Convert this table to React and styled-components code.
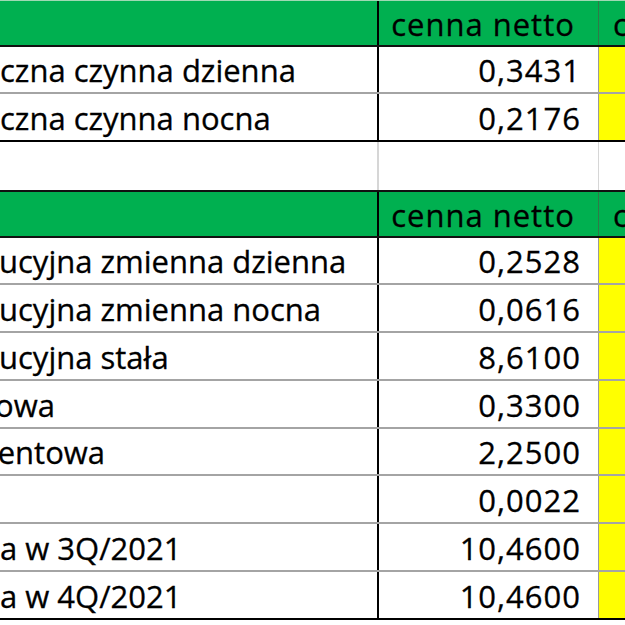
import React from 'react'
import styled, { createGlobalStyle, css } from 'styled-components'

const GlobalStyle = createGlobalStyle`
  html, body {
    margin: 0;
    padding: 0;
    background: #fff;
    overflow: hidden;
  }
`

const Sheet = styled.div`
  width: 625px;
  height: 625px;
  overflow: hidden;
  background: #fff;
  font-family: 'Open Sans', 'Noto Sans', sans-serif;
  font-size: 31px;
  color: #000;
  -webkit-text-stroke: 0.3px #000;
`

const Row = styled.div`
  display: grid;
  grid-template-columns: 379px 220px 1fr;
  height: ${p => p.$height || 47.75}px;
  box-sizing: border-box;
  border-bottom: ${p => p.$last ? '2px solid #000' : '2px solid #a4a4a4'};

  ${p => p.$kind === 'header' && css`
    background: #00b050;
    border-bottom: 2px solid #111;
  `}

  ${p => p.$kind === 'spacer' && css`
    border-bottom: 0;
  `}

  ${p => p.$top && css`
    border-top: ${p.$top};
  `}
`

const LabelCell = styled.div`
  box-sizing: border-box;
  border-right: 2px solid ${p => p.$kind === 'spacer' ? '#d6d6d6' : '#000'};
  overflow: hidden;
  white-space: nowrap;
  display: flex;
  align-items: center;
  padding-top: 2px;

  span {
    margin-left: ${p => p.$shift || 0}px;
  }
`

const ValueCell = styled.div`
  box-sizing: border-box;
  border-right: 1px solid ${p =>
    p.$kind === 'header' ? '#2f7a48' : p.$kind === 'spacer' ? '#d6d6d6' : '#9a9a9a'};
  display: flex;
  align-items: center;
  justify-content: ${p => p.$kind === 'header' ? 'center' : 'flex-end'};
  padding: 2px 17px 0 0;
  padding-left: ${p => p.$kind === 'header' ? '6px' : '0'};
  letter-spacing: 1px;
  white-space: nowrap;
`

const ExtraCell = styled.div`
  box-sizing: border-box;
  overflow: hidden;
  white-space: nowrap;
  display: flex;
  align-items: center;
  padding: 2px 0 0 14px;
  background: ${p => p.$kind === 'data' ? '#ffff00' : 'transparent'};
`

const firstTable = [
  { label: 'czna czynna dzienna', shift: 0, value: '0,3431' },
  { label: 'czna czynna nocna', shift: 0, value: '0,2176' },
]

const secondTable = [
  { label: 'ucyjna zmienna dzienna', shift: -1, value: '0,2528' },
  { label: 'ucyjna zmienna nocna', shift: -1, value: '0,0616' },
  { label: 'ucyjna stała', shift: -1, value: '8,6100' },
  { label: 'owa', shift: -5, value: '0,3300' },
  { label: 'mentowa', shift: -31, value: '2,2500' },
  { label: '', shift: 0, value: '0,0022' },
  { label: 'a w 3Q/2021', shift: 0, value: '10,4600' },
  { label: 'a w 4Q/2021', shift: 0, value: '10,4600' },
]

const HeaderRow = ({ height, top }) => (
  <Row $kind="header" $height={height} $top={top}>
    <LabelCell $kind="header" />
    <ValueCell $kind="header">cenna netto</ValueCell>
    <ExtraCell $kind="header">cenna brutto</ExtraCell>
  </Row>
)

const DataRows = ({ rows }) =>
  rows.map((row, index) => (
    <Row key={`row-${row.value}-${index}`} $kind="data" $last={index === rows.length - 1}>
      <LabelCell $kind="data" $shift={row.shift}>
        <span>{row.label}</span>
      </LabelCell>
      <ValueCell $kind="data">{row.value}</ValueCell>
      <ExtraCell $kind="data" />
    </Row>
  ))

const App = () => (
  <>
    <GlobalStyle />
    <Sheet>
      <HeaderRow height={46.5} top="1px solid #9fd9b3" />
      <DataRows rows={firstTable} />
      <Row $kind="spacer">
        <LabelCell $kind="spacer" />
        <ValueCell $kind="spacer" />
        <ExtraCell $kind="spacer" />
      </Row>
      <HeaderRow top="2px solid #111" />
      <DataRows rows={secondTable} />
    </Sheet>
  </>
)

export default App
